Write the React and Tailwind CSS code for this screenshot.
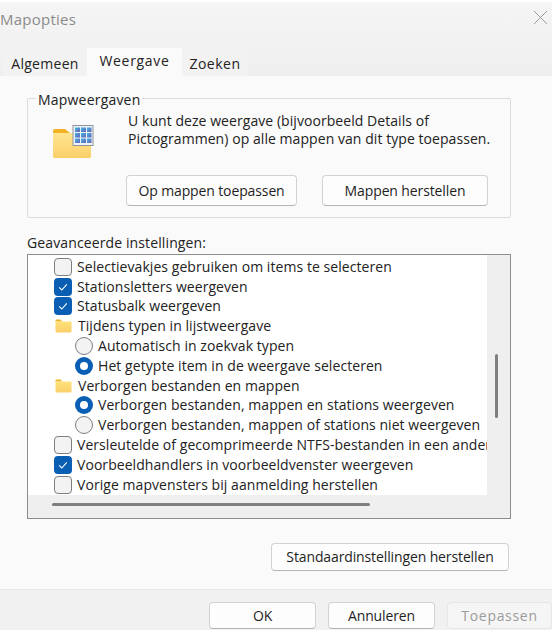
import React from "react";

const FONT = "font-['Open_Sans','Noto_Sans',sans-serif]";

function Check({ on }) {
  if (on)
    return (
      <span className="flex h-[18px] w-[18px] shrink-0 items-center justify-center rounded-[4px] bg-[#0a5fb4]">
        <svg width="12" height="12" viewBox="0 0 12 12" fill="none">
          <path d="M2.2 6.4 4.8 9 9.8 3.4" stroke="#fff" strokeWidth="1.1" />
        </svg>
      </span>
    );
  return <span className="block h-[18px] w-[18px] shrink-0 rounded-[4px] border border-[#7f7f7f] bg-[#f3f3f3]" />;
}

function Radio({ on }) {
  if (on)
    return (
      <span className="flex h-[18px] w-[18px] shrink-0 items-center justify-center rounded-full bg-[#0a5fb4]">
        <span className="block h-[8px] w-[8px] rounded-full bg-white" />
      </span>
    );
  return <span className="block h-[18px] w-[18px] shrink-0 rounded-full border border-[#7f7f7f] bg-[#f3f3f3]" />;
}

function SmallFolder() {
  return (
    <svg width="17" height="14" viewBox="0 0 17 14" className="shrink-0">
      <defs>
        <linearGradient id="sf" x1="0" y1="0" x2="0" y2="1">
          <stop offset="0" stopColor="#ffe27a" />
          <stop offset="1" stopColor="#f9cf68" />
        </linearGradient>
      </defs>
      <path d="M0.5 1.5a1 1 0 0 1 1-1h4l2 2h-7.2z" fill="#efb32a" />
      <rect x="0.5" y="2.5" width="16" height="11" rx="1" fill="url(#sf)" />
    </svg>
  );
}

function Row({ kind, on, children }) {
  return (
    <div className="flex h-[19.8px] items-center whitespace-nowrap">
      {kind === "check" && (
        <div className="flex items-center gap-[5px] pl-[26px]">
          <Check on={on} />
          <span>{children}</span>
        </div>
      )}
      {kind === "radio" && (
        <div className="flex items-center gap-[5px] pl-[47px]">
          <Radio on={on} />
          <span>{children}</span>
        </div>
      )}
      {kind === "folder" && (
        <div className="flex items-center gap-[6px] pl-[27px]">
          <SmallFolder />
          <span>{children}</span>
        </div>
      )}
    </div>
  );
}

function Btn({ className, children }) {
  return (
    <button className={"flex items-center justify-center rounded-[4px] border border-[#d2d2d2] border-b-[#b4b4b4] bg-[#fdfdfd] tracking-[-0.12px] text-[#1f1f1f] " + className}>
      {children}
    </button>
  );
}

export default function App() {
  return (
    <div className={"h-[630px] w-[557px] overflow-hidden bg-white text-[14px] leading-[18px] tracking-[0.06px] text-[#222] " + FONT}>
      <div className="flex h-[630px] w-[552px] flex-col pt-[2px]">
        {/* title + tabs */}
        <div className="h-[74px] shrink-0 bg-gradient-to-b from-[#f5f5f5] to-[#efefef]">
          <div className="flex h-[46px] items-start justify-between pr-[4px] pt-[7px]">
            <span className="text-[15px] leading-[20px] tracking-[0.25px] text-[#8b8b8b]">Mapopties</span>
            <svg width="15" height="15" viewBox="0 0 15 15" className="mt-[1px]" fill="none">
              <path d="M1 1 14 14M14 1 1 14" stroke="#9a9a9a" strokeWidth="1" />
            </svg>
          </div>
          <div className="flex h-[28px] items-end pl-[3px]">
            <div className="flex h-[25px] w-[84px] items-center justify-center bg-[#f2f2f2] pt-[1px] tracking-[0.3px]">Algemeen</div>
            <div className="flex h-[28px] w-[95px] items-center justify-center bg-[#fafafa] pb-[3px] tracking-[0.7px]">Weergave</div>
            <div className="flex h-[25px] w-[66px] items-center justify-center bg-[#f2f2f2] pt-[1px] tracking-[0.5px]">Zoeken</div>
          </div>
        </div>

        {/* content */}
        <div className="flex flex-1 flex-col bg-[#fafafa] pl-[27px] pr-[41px] pt-[22px]">
          <div className="relative h-[120px] shrink-0 rounded-[2px] border border-[#dcdcdc]">
            <span className="absolute left-[8px] top-[-8px] bg-[#fafafa] px-[2px] leading-[17px] tracking-[0.2px]">Mapweergaven</span>
            <div className="flex pl-[24px] pt-[13px]">
              <svg width="42" height="34" viewBox="0 0 42 34" className="mt-[13px] shrink-0">
                <defs>
                  <linearGradient id="bf" x1="0" y1="0" x2="0" y2="1">
                    <stop offset="0" stopColor="#ffe591" />
                    <stop offset="1" stopColor="#fbcf6a" />
                  </linearGradient>
                  <linearGradient id="gr" x1="0" y1="0" x2="1" y2="1">
                    <stop offset="0" stopColor="#3fb6e4" />
                    <stop offset="1" stopColor="#6a5fb5" />
                  </linearGradient>
                </defs>
                <path d="M1 6a2 2 0 0 1 2-2h10l5 4H1z" fill="#f2b222" />
                <rect x="1" y="8" width="38" height="25" rx="1.5" fill="url(#bf)" />
                <rect x="21" y="0.5" width="20" height="20" fill="#eef3f8" stroke="#8e9499" />
                <g fill="url(#gr)">
                  <rect x="23" y="2.5" width="5" height="4.5" />
                  <rect x="29" y="2.5" width="5" height="4.5" />
                  <rect x="35" y="2.5" width="4.5" height="4.5" />
                  <rect x="23" y="8" width="5" height="4.5" />
                  <rect x="29" y="8" width="5" height="4.5" />
                  <rect x="35" y="8" width="4.5" height="4.5" />
                  <rect x="23" y="13.5" width="5" height="4.5" />
                  <rect x="29" y="13.5" width="5" height="4.5" />
                  <rect x="35" y="13.5" width="4.5" height="4.5" />
                </g>
              </svg>
              <div className="pl-[34px]">
                <p>U kunt deze weergave (bijvoorbeeld Details of</p>
                <p>Pictogrammen) op alle mappen van dit type toepassen.</p>
              </div>
            </div>
            <div className="flex gap-[25px] pl-[98px] pt-[16px]">
              <Btn className="h-[31px] w-[171px]">Op mappen toepassen</Btn>
              <Btn className="h-[31px] w-[166px]">Mappen herstellen</Btn>
            </div>
          </div>

          <div className="pt-[14px] leading-[22px] tracking-[0.12px]">Geavanceerde instellingen:</div>

          <div className="grid h-[265px] shrink-0 grid-cols-[1fr_23px] grid-rows-[1fr_23px] border border-[#8d8d8d] bg-white">
            <div className="overflow-hidden pt-[2px]">
              <Row kind="check">Selectievakjes gebruiken om items te selecteren</Row>
              <Row kind="check" on>Stationsletters weergeven</Row>
              <Row kind="check" on>Statusbalk weergeven</Row>
              <Row kind="folder">Tijdens typen in lijstweergave</Row>
              <Row kind="radio">Automatisch in zoekvak typen</Row>
              <Row kind="radio" on>Het getypte item in de weergave selecteren</Row>
              <Row kind="folder">Verborgen bestanden en mappen</Row>
              <Row kind="radio" on>Verborgen bestanden, mappen en stations weergeven</Row>
              <Row kind="radio">Verborgen bestanden, mappen of stations niet weergeven</Row>
              <Row kind="check">Versleutelde of gecomprimeerde NTFS-bestanden in een andere kleur weergeven</Row>
              <Row kind="check" on>Voorbeeldhandlers in voorbeeldvenster weergeven</Row>
              <Row kind="check">Vorige mapvensters bij aanmelding herstellen</Row>
            </div>
            <div className="bg-[#efefef] pl-[8px] pt-[99px]">
              <div className="h-[64px] w-[3px] rounded-full bg-[#7f7f7f]" />
            </div>
            <div className="bg-[#efefef] pl-[24px] pt-[8px]">
              <div className="h-[3px] w-[318px] rounded-full bg-[#7f7f7f]" />
            </div>
            <div className="bg-[#efefef]" />
          </div>

          <div className="flex justify-end pr-[2px] pt-[24px]">
            <Btn className="h-[28px] w-[238px]">Standaardinstellingen herstellen</Btn>
          </div>
        </div>

        {/* footer */}
        <div className="flex h-[41px] shrink-0 gap-[12px] border-t border-[#e9e9e9] bg-[#f1f1f1] pl-[209px] pt-[12px]">
          <Btn className="h-[27px] w-[107px]">OK</Btn>
          <Btn className="h-[27px] w-[107px]">Annuleren</Btn>
          <div className="flex h-[27px] w-[105px] items-center justify-center rounded-[4px] border border-[#e6e6e6] bg-[#f5f5f5] tracking-[0.7px] text-[#9b9b9b]">Toepassen</div>
        </div>
      </div>
    </div>
  );
}
